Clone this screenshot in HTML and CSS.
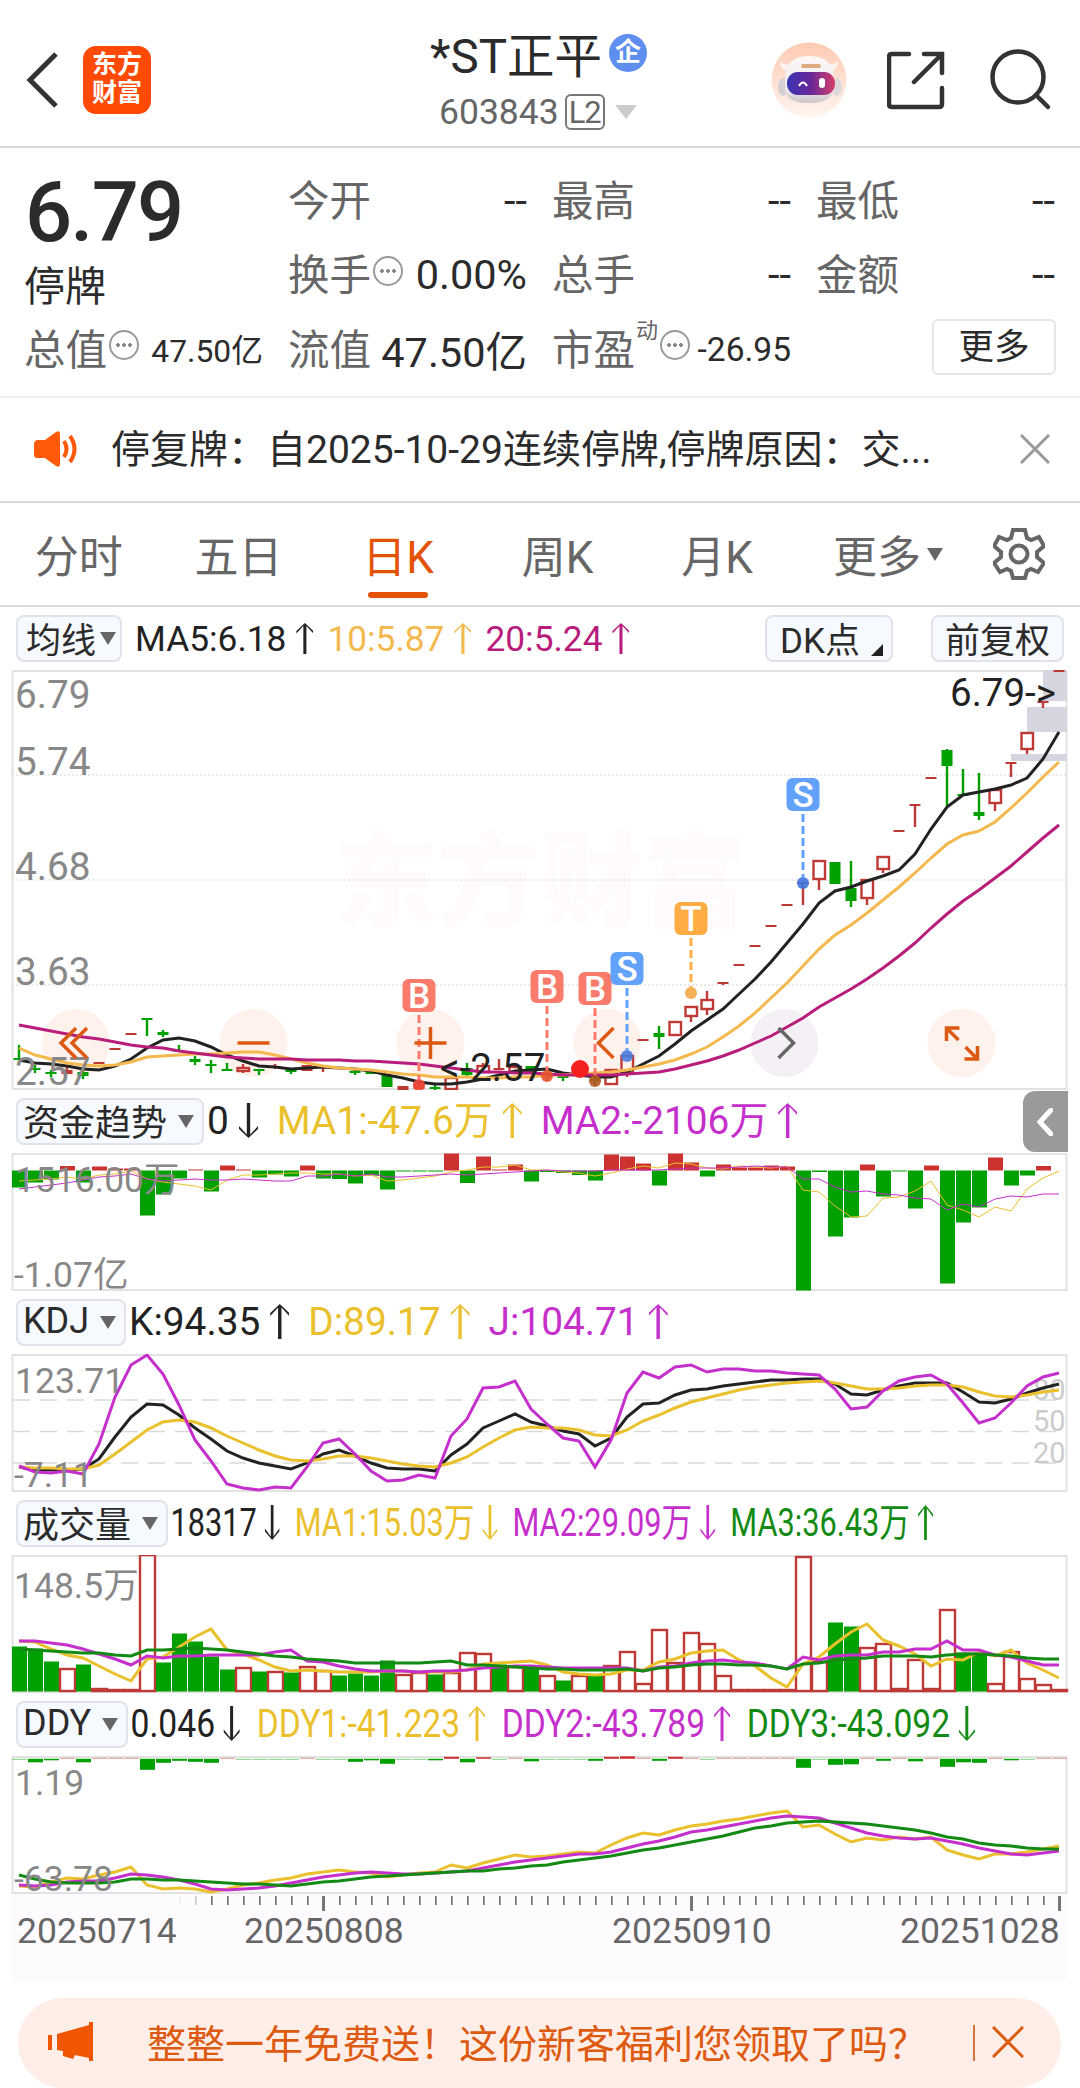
FILE: index.html
```html
<!DOCTYPE html>
<html lang="zh-CN">
<head>
  <meta charset="UTF-8" />
  <meta name="viewport" content="width=device-width, initial-scale=1.0"/>
  <title>*ST正平 603843</title>
  <link rel="stylesheet" href="styles.css">
</head>
<body>

  <header class="header">
    <svg class="back" width="34" height="58" viewBox="0 0 34 58"><path d="M30 3L4 29L30 55"/></svg>
    <div class="logo">东方<br>财富</div>
    <div class="title">
      <div class="title-name">*ST正平<span class="badge">企</span></div>
      <div class="title-code">603843<span class="level">L2</span><i class="tri tri-light"></i></div>
    </div>
    <div class="actions">
      <svg width="76" height="76" viewBox="0 0 76 76">
        <defs>
          <linearGradient id="halo" x1="0" y1="0" x2="0" y2="1"><stop offset="0" stop-color="#fdcab2"/><stop offset="1" stop-color="#fff5f0"/></linearGradient>
          <linearGradient id="visor" x1="0" y1="0" x2="1" y2="0"><stop offset="0" stop-color="#3a35b5"/><stop offset="0.5" stop-color="#6a2798"/><stop offset="1" stop-color="#d63f6c"/></linearGradient>
          <linearGradient id="shell" x1="0" y1="0" x2="0" y2="1"><stop offset="0" stop-color="#fdf8f7"/><stop offset="0.7" stop-color="#eeeaec"/><stop offset="1" stop-color="#c9c4c6"/></linearGradient>
        </defs>
        <circle cx="38" cy="38" r="37.5" fill="url(#halo)"/>
        <path d="M9 19Q9 29 18 29L22 22Q13 24 9 19ZM67 19Q67 29 58 29L54 22Q63 24 67 19Z" fill="#fbf3f1"/>
        <ellipse cx="12" cy="45" rx="5" ry="9" fill="#d5d0d4"/>
        <ellipse cx="66" cy="45" rx="5" ry="9" fill="#ddd8dc"/>
        <path d="M14 38Q14 14 38 14Q63 14 63 38V46Q62 61 38 61Q14 61 14 47Z" fill="url(#shell)"/>
        <rect x="16" y="30" width="48" height="23" rx="11" fill="url(#visor)"/>
        <rect x="30" y="22" width="20" height="4" rx="2" fill="#dfa97f"/>
        <path d="M28 44Q32 37 36 44" fill="none" stroke="#fff" stroke-width="2"/>
        <rect x="48" y="36" width="6" height="10" rx="3" fill="#fff"/>
      </svg>
      <svg class="icon-line" width="60" height="60" viewBox="0 0 60 60"><path d="M22 4H5Q2 4 2 7V54Q2 57 5 57H52Q55 57 55 54V38M37 4H55V23M55 4L27 32"/></svg>
      <svg class="icon-line" width="62" height="62" viewBox="0 0 62 62"><circle cx="28" cy="28" r="25.5"/><path d="M46 46L58 58"/></svg>
    </div>
  </header>

  <section class="quote">
    <div class="quote-main">
      <div class="price">6.79</div>
      <div class="state">停牌</div>
    </div>
    <div class="cell"><span>今开</span><b>--</b></div>
    <div class="cell"><span>最高</span><b>--</b></div>
    <div class="cell"><span>最低</span><b>--</b></div>
    <div class="cell"><span>换手</span><i class="dots"></i><b>0.00%</b></div>
    <div class="cell"><span>总手</span><b>--</b></div>
    <div class="cell"><span>金额</span><b>--</b></div>
    <div class="cell"><span>总值</span><i class="dots"></i><b class="small">47.50亿</b></div>
    <div class="cell"><span>流值</span><b>47.50亿</b></div>
    <div class="cell"><span>市盈</span><sup>动</sup><i class="dots"></i><b class="small pe">-26.95</b></div>
    <div class="cell"><button class="more">更多</button></div>
  </section>

  <section class="notice">
    <svg width="46" height="38" viewBox="0 0 46 38"><path d="M2 11Q2 10 3 10H11L22 2Q26 0 26 4V34Q26 38 22 36L11 28H3Q0 28 0 24V14Q0 11 3 10Z" fill="#ff5a0a"/><path d="M30 11Q35 19 30 27M36 6Q45 19 36 32" fill="none" stroke="#ff5a0a" stroke-width="4"/></svg>
    <p>停复牌：自2025-10-29连续停牌,停牌原因：交...</p>
    <svg width="30" height="30" viewBox="0 0 30 30"><path d="M1 1L29 29M29 1L1 29" stroke="#999" stroke-width="3"/></svg>
  </section>

  <nav class="tabs">
    <a>分时</a>
    <a>五日</a>
    <a class="active">日K</a>
    <a>周K</a>
    <a>月K</a>
    <a class="tab-more">更多<i class="tri"></i></a>
    <svg width="52" height="54" viewBox="-26 -27 52 54"><path d="M-6 -24H6L8 -16L12 -14L20 -17L25 -8L18 -2V3L25 9L19 18L12 15L8 17L6 24H-6L-8 17L-12 15L-19 18L-25 9L-18 3V-2L-25 -8L-20 -17L-12 -14L-8 -16Z"/><circle r="8.5"/></svg>
  </nav>

  <div class="legend legend-ma">
    <span class="chip">均线<i class="tri"></i></span>
    <div class="values">
      <span class="black up">MA5:6.18</span>
      <span class="gold up">10:5.87</span>
      <span class="plum up">20:5.24</span>
    </div>
    <span class="chip chip-dk">DK点<i class="corner"></i></span>
    <span class="chip chip-fq">前复权</span>
  </div>
  <svg class="panel" id="kline" width="1080" height="420"></svg>

  <div class="legend">
    <span class="chip">资金趋势<i class="tri"></i></span>
    <div class="values">
      <span class="black down">0</span>
      <span class="yellow up">MA1:-47.6万</span>
      <span class="pink up">MA2:-2106万</span>
    </div>
    <span class="drawer"><svg width="16" height="28" viewBox="0 0 16 28"><path d="M14 2L3 14L14 26"/></svg></span>
  </div>
  <svg class="panel" id="fund" width="1080" height="138"></svg>

  <div class="legend">
    <span class="chip">KDJ<i class="tri"></i></span>
    <div class="values">
      <span class="black up">K:94.35</span>
      <span class="yellow up">D:89.17</span>
      <span class="pink up">J:104.71</span>
    </div>
  </div>
  <svg class="panel" id="kdj" width="1080" height="138"></svg>

  <div class="legend">
    <span class="chip">成交量<i class="tri"></i></span>
    <div class="values narrow-vol">
      <span class="black down">18317</span>
      <span class="yellow down">MA1:15.03万</span>
      <span class="pink down">MA2:29.09万</span>
      <span class="green up">MA3:36.43万</span>
    </div>
  </div>
  <svg class="panel" id="vol" width="1080" height="138"></svg>

  <div class="legend">
    <span class="chip">DDY<i class="tri"></i></span>
    <div class="values narrow-ddy">
      <span class="black down">0.046</span>
      <span class="yellow up">DDY1:-41.223</span>
      <span class="pink up">DDY2:-43.789</span>
      <span class="green down">DDY3:-43.092</span>
    </div>
  </div>
  <svg class="panel" id="ddy" width="1080" height="138"></svg>

  <svg class="axis" id="axis" width="1080" height="86"></svg>

  <footer class="promo">
    <svg width="46" height="40" viewBox="0 0 46 40"><path d="M0 13H4V28H0ZM9 12L41 3V0H45V39H41V36L27 33L25 37L15 34V29L9 28Z" fill="#f05500"/></svg>
    <p>整整一年免费送！这份新客福利您领取了吗？</p>
    <i class="divider"></i>
    <svg width="32" height="32" viewBox="0 0 32 32"><path d="M1 1L31 31M31 1L1 31" stroke="#dd5a10" stroke-width="3"/></svg>
  </footer>

  <script src="charts.js"></script>
</body>
</html>
```
FILE: styles.css
```css
* {
  box-sizing: border-box;
}

body {
  margin: 0;
  width: 1080px;
  height: 2088px;
  overflow: hidden;
  background: #fff;
  color: #2b2b2b;
  font-family: Roboto, "Noto Sans CJK SC", sans-serif;
}

svg {
  display: block;
  flex: none;
}

p {
  margin: 0;
}

i {
  font-style: normal;
}

.tri {
  display: inline-block;
  border: 8px solid transparent;
  border-top: 13px solid #666;
  border-bottom: 0;
}

.tri-light {
  border-width: 14px 11px 0;
  border-top-color: #ccc;
  margin-left: 10px;
}

/* header */
.header {
  display: flex;
  align-items: center;
  height: 148px;
  padding: 14px 28px 0 26px;
  border-bottom: 2px solid #d9d9d9;
}

.back {
  fill: none;
  stroke: #333;
  stroke-width: 5;
}

.logo {
  width: 68px;
  height: 68px;
  margin-left: 23px;
  padding-top: 5px;
  border-radius: 13px;
  background: #ff4a05;
  color: #fff;
  font-size: 25px;
  font-weight: 700;
  line-height: 28px;
  text-align: center;
}

.title {
  width: 250px;
  margin-left: 272px;
}

.title-name,
.title-code {
  display: flex;
  align-items: center;
  white-space: nowrap;
}

.title-name {
  height: 56px;
  margin: 5px 0 0 7px;
  font-size: 47.5px;
}

.badge {
  width: 38px;
  height: 38px;
  margin-left: 7px;
  border-radius: 50%;
  background: #5f8fee;
  color: #fff;
  font-size: 26px;
  font-weight: 700;
  line-height: 36px;
  text-align: center;
}

.title-code {
  height: 58px;
  margin: 2px 0 0 16px;
  color: #666;
  font-size: 35.5px;
}

.level {
  width: 40px;
  height: 36px;
  margin-left: 6px;
  border: 2px solid #777;
  border-radius: 6px;
  font-size: 31px;
  line-height: 33px;
  letter-spacing: -1px;
  text-align: center;
}

.actions {
  display: flex;
  align-items: center;
  margin-left: auto;
}

.actions svg + svg {
  margin-left: 40px;
}

.actions svg + svg + svg {
  margin-left: 43px;
}

.icon-line {
  fill: none;
  stroke: #333;
  stroke-width: 4.5;
  stroke-linecap: round;
}

/* quote */
.quote {
  display: grid;
  grid-template-columns: repeat(4, 238px);
  grid-template-rows: repeat(3, 74.5px);
  column-gap: 26px;
  height: 250px;
  padding: 15px 25px 0;
  border-bottom: 2px solid #efefef;
}

.quote-main {
  grid-row: span 2;
}

.price {
  height: 100px;
  font-size: 83px;
  font-weight: 500;
  line-height: 100px;
  letter-spacing: -1.8px;
}

.state {
  margin-left: -1px;
  font-size: 41px;
  line-height: 49px;
}

.cell {
  display: flex;
  align-items: center;
  font-size: 41.5px;
  white-space: nowrap;
}

.cell span {
  margin: -5px 0 0 -1px;
  color: #666;
}

.cell b {
  margin-left: auto;
  font-weight: 400;
}

.cell .small {
  margin-top: -3px;
  font-size: 31.8px;
}

.cell .pe {
  margin-top: 0;
  font-size: 33.5px;
}

.cell sup {
  margin: -36px 0 0 1px;
  color: #666;
  font-size: 22px;
  line-height: 22px;
}

.dots {
  width: 30px;
  height: 30px;
  margin: -8px 0 0 2px;
  border: 2px solid #999;
  border-radius: 50%;
  background:
    radial-gradient(circle at 7px 13px, #888 1.6px, transparent 2px),
    radial-gradient(circle at 13px 13px, #888 1.6px, transparent 2px),
    radial-gradient(circle at 19px 13px, #888 1.6px, transparent 2px);
}

.more {
  width: 124px;
  height: 56px;
  margin: -4px -1px 0 auto;
  padding: 0;
  border: 2px solid #e6e6e6;
  border-radius: 6px;
  background: #fff;
  color: #2b2b2b;
  font: inherit;
  font-size: 35.5px;
  line-height: 50px;
}

/* notice */
.notice {
  display: flex;
  align-items: center;
  height: 105px;
  padding: 0 30px 2px 34px;
  border-bottom: 2px solid #d9d9d9;
}

.notice p {
  flex: 1;
  margin: -5px 0 0 31px;
  font-size: 39px;
  white-space: nowrap;
}

/* tabs */
.tabs {
  display: flex;
  align-items: center;
  height: 104px;
  border-bottom: 2px solid #dcdcdc;
  color: #666;
  font-size: 44px;
}

.tabs a {
  position: relative;
  left: -1px;
  width: 159.6px;
  text-align: center;
}

.tabs .active {
  color: #e35205;
}

.tabs .active::after {
  content: "";
  position: absolute;
  left: 50px;
  bottom: -12px;
  width: 60px;
  height: 6px;
  border-radius: 3px;
  background: #e35205;
}

.tabs .tab-more {
  display: flex;
  align-items: center;
  width: 157px;
  margin-left: 36px;
}

.tab-more .tri {
  margin-left: 6px;
}

.tabs svg {
  margin-left: 2px;
  fill: none;
  stroke: #666;
  stroke-width: 4;
}

/* legends */
.legend {
  display: flex;
  align-items: center;
  height: 63px;
  padding-left: 16px;
  font-size: 38.8px;
  white-space: nowrap;
}

.chip {
  display: flex;
  align-items: center;
  flex: none;
  height: 47px;
  padding: 0 8px 3px 5px;
  border: 2px solid #e1e2ea;
  border-radius: 8px;
  background: #f6f9fe;
  font-size: 36px;
}

.chip .tri {
  margin: 3px 0 0 11px;
}

.values {
  display: flex;
  height: 44px;
  margin-top: -2px;
  line-height: 44px;
  transform-origin: left center;
}

.values span {
  display: flex;
  align-items: center;
  margin: 0 16px 0 3px;
}

/* arrows: stem plus open head */
.up::after,
.down::after {
  content: "";
  width: 19px;
  height: 35px;
  margin-left: 10px;
  background: currentColor;
  clip-path: polygon(50% 0, 100% 26%, 100% 34%, 59% 10%, 59% 100%, 41% 100%, 41% 10%, 0 34%, 0 26%);
}

.down::after {
  transform: rotate(180deg);
}

.narrow-vol {
  transform: scaleX(0.792);
}

.narrow-ddy {
  transform: scaleX(0.867);
}

.legend-ma {
  height: 63px;
  font-size: 35.3px;
}

.legend-ma .chip {
  padding: 0 4px 3px 8px;
  font-size: 35px;
}

.legend-ma .chip .tri {
  margin-left: 4px;
}

.legend-ma .values {
  margin: 0 0 0 10px;
}

.legend-ma .values span {
  margin-right: 11px;
}

.legend-ma .values span::after {
  width: 17px;
  height: 31px;
}

.legend-ma .chip-dk {
  width: 128px;
  margin-left: auto;
  padding: 0 0 3px 13px;
}

.legend-ma .chip-fq {
  width: 133px;
  margin: 0 16px 0 38px;
  padding-left: 12px;
}

.corner {
  margin: 26px 0 0 11px;
  border-left: 12px solid transparent;
  border-bottom: 12px solid #222;
}

.drawer {
  display: flex;
  align-items: center;
  width: 45px;
  height: 61px;
  margin: 0 12px 0 auto;
  padding-left: 14px;
  border-radius: 12px 0 0 12px;
  background: #9b999c;
}

.drawer path {
  fill: none;
  stroke: #fff;
  stroke-width: 5;
  stroke-linecap: round;
}

.black { color: #222; }
.gold { color: #f3b94e; }
.plum { color: #b81d7b; }
.yellow { color: #eac02d; }
.pink { color: #c52fcb; }
.green { color: #138a13; }

/* charts */
.frame {
  fill: none;
  stroke: #e2e2e2;
  stroke-width: 2;
}

.grid {
  stroke: #e4e4e4;
  stroke-width: 1.5;
  stroke-dasharray: 2 2;
}

.dash {
  stroke: #d9d9d9;
  stroke-width: 1.5;
  stroke-dasharray: 17 10;
}

.scale {
  fill: #888;
  font-size: 35.5px;
}

.scale-big {
  fill: #888;
  font-size: 38.7px;
}

.level-mark {
  fill: #ccc;
  font-size: 29px;
}

.extreme {
  fill: #222;
  font-size: 38.5px;
}

.watermark {
  fill: #fefafe;
  font-size: 103px;
  font-weight: 900;
}

.tag {
  fill: #fff;
  font-size: 35px;
  font-weight: 500;
  text-anchor: middle;
}

.tool {
  fill: none;
  stroke: #dd5a14;
  stroke-width: 3.5;
}

.tool-next {
  stroke: #666;
}

.date {
  fill: #666;
  font-size: 35.5px;
}

/* promo */
.promo {
  display: flex;
  align-items: center;
  height: 90px;
  margin: 18px 19px 0 18px;
  padding: 0 37px 0 30px;
  border-radius: 45px;
  background: #ffeee7;
  color: #dd5a10;
}

.promo p {
  flex: 1;
  margin: -5px 0 0 53px;
  font-size: 39px;
  white-space: nowrap;
}

.promo svg {
  margin-top: -2px;
}

.divider {
  width: 2px;
  height: 36px;
  margin-right: 17px;
  background: #d9743c;
}
```
FILE: charts.js
```js
const LEFT = 12, RIGHT = 1067;
const RED = "#bf3a36", GREEN = "#00a000";
const BLACK = "#222", GOLD = "#f3b94e", PLUM = "#b81d7b";
const YELLOW = "#eac02d", PINK = "#c52fcb", DEEP = "#138a13";

const x = i => 19 + 16 * i;

function line(ys, color, width = 3) {
  const pts = ys.map((y, i) => x(i) + "," + y).join(" ");
  return `<polyline points="${pts}" fill="none" stroke="${color}" stroke-width="${width}"/>`;
}

function rect(x0, y0, w, h, fill, extra = "") {
  return `<rect x="${x0}" y="${y0}" width="${w}" height="${h}" fill="${fill}" ${extra}/>`;
}

function text(x0, y0, str, cls = "scale") {
  return `<text x="${x0}" y="${y0}" class="${cls}">${str}</text>`;
}

function frame(h) {
  return `<rect class="frame" x="${LEFT}.5" y="1" width="${RIGHT - LEFT - 1}" height="${h - 2}"/>`;
}

function draw(id, parts) {
  document.getElementById(id).innerHTML = parts.join("");
}

/* ---- K line: [index, type, body top, body bottom, high, low] ---- */
// g = falling, r = rising (hollow), f = rising, thin body
const candles = [
  [0,"g",388,390,375,390],[1,"g",398,400,395,403],[2,"g",402,404,400,407],[3,"f",400,404,396,404],
  [4,"g",402,406,399,409],[5,"f",392,394],[6,"f",378,380],[7,"f",363,365],[8,"g",348,350,348,366],
  [9,"g",362,365,360,367],[10,"g",380,382,375,382],[11,"g",389,392,386,395],[12,"g",394,396,390,403],
  [13,"g",399,401,393,401],[14,"r",397,401,394,403],[15,"g",399,401,399,405],[16,"f",396,398,394,399],
  [17,"g",399,402,398,404],[18,"f",395,401],[19,"f",396,398,395,402],[20,"g",397,398],[21,"g",401,403,400,405],
  [22,"g",402,404],[23,"g",405,417],[24,"f",416,420],[25,"f",413,419,410,419],[26,"g",417,419,414,420],
  [27,"r",407,419],[28,"g",398,405,393,407],[29,"r",395,402,393,402],[30,"f",398,400,389,400],
  [31,"r",396,402],[32,"g",396,403],[33,"f",405,407,404,411],[34,"g",406,408,406,411],[36,"g",409,411,407,415],
  [37,"r",399,414],[38,"r",385,403,385,407],[39,"f",369,371],[40,"g",363,367,356,379],[41,"r",351,365,351,366],
  [42,"r",336,346,336,352],[43,"r",329,339,321,345],[44,"f",312,314,312,315],[45,"f",294,296],[46,"f",275,277],
  [47,"f",255,257],[48,"f",234,236],[49,"f",212,214,212,235],[50,"r",190,209,190,220],[51,"g",192,214],
  [52,"g",218,231,191,237],[53,"r",209,228,209,235],[54,"r",186,199,186,203],[55,"f",160,162],
  [56,"f",134,136,134,157],[57,"f",107,109],[58,"g",80,96,79,136],[59,"g",124,126,99,126],[60,"g",142,146,103,150],
  [61,"r",119,133,119,141],[62,"f",92,94,92,107],[63,"r",62,79,62,84],[64,"f",31,33,31,38],[65,"f",0,2]
];
const ma5 = [390,393,394,396,399,400,396,389,378,370,368,371,377,385,391,396,397,399,398,397,
  398,399,401,405,408,412,414,414,412,409,405,401,400,399,403,405,407,407,402,394,
  386,374,361,350,339,324,309,292,273,254,233,221,217,211,206,200,184,159,137,125,122,119,115,108,89,62];
const ma10 = [378,385,389,393,395,396,395,392,387,386,385,384,384,383,382,382,385,389,393,396,
  398,399,400,402,404,405,407,407,407,408,408,407,407,405,405,404,403,402,400,397,
  394,390,384,377,367,356,343,328,313,296,279,265,255,243,230,217,203,188,174,165,161,152,138,123,107,92];
const ma20 = [355,358,361,364,367,369,372,375,377,378,381,383,385,387,388,389,389,389,390,390,
  390,391,391,392,393,394,396,398,400,402,402,403,403,404,405,405,405,405,404,403,
  402,399,395,391,386,380,373,366,357,348,337,328,319,309,298,286,273,258,244,231,220,208,196,182,168,155];

function candle([i, type, top, bottom, high, low]) {
  const color = type === "g" ? GREEN : RED;
  let out = "";
  if (high !== undefined) {
    const stem = (a, b) => b > a ? rect(x(i) - 1.2, a, 2.4, b - a, color) : "";
    out += type === "r" ? stem(high, top) + stem(bottom, low) : stem(high, low);
  }
  if (type === "r") {
    out += rect(x(i) - 5.5, top + 1, 11.5, bottom - top - 1, "none", `stroke="${color}" stroke-width="2.4"`);
  } else {
    out += rect(x(i) - 5.5, top, 11, bottom - top, color);
  }
  return out;
}

/* trade markers: [index, letter, tag top, dot y, tag colour, dot colour] */
const marks = [
  [25,"B",309,415,"#fa7b6c","#f24a35"],[33,"B",300,406,"#fa7b6c","#e8552f"],[36,"B",302,411,"#fa7b6c","#b5561f"],
  [38,"S",282,386,"#62a2fb","#4a7be0"],[42,"T",232,323,"#ffac45","#f5a742"],[49,"S",108,213,"#62a2fb","#3f74dc"]
];

function mark([i, letter, top, dot, color, dotColor]) {
  return `<line x1="${x(i)}" y1="${top + 36}" x2="${x(i)}" y2="${dot - 6}" stroke="${color}" stroke-width="3" stroke-dasharray="8 4"/>`
    + `<circle cx="${x(i)}" cy="${dot}" r="6" fill="${dotColor}" opacity="0.9"/>`
    + rect(x(i) - 16.5, top, 33, 33, color, 'rx="6"')
    + text(x(i), top + 29, letter, "tag");
}

const tools = [
  [76, "M0 -15L-15 0L0 15M11 -15L-4 0L11 15"],
  [253.5, "M-16 0H16"],
  [430.5, "M-16 0H16M0 -16V16"],
  [607.5, "M6 -15L-9 0L6 15"],
  [784.5, "M-6 -15L9 0L-6 15"],
  [961.5, "M-15 -2V-15H-2M-15 -15L-3 -3M16 3V16H3M16 16L4 4"]
];

draw("kline", [
  text(334, 249, "东方财富", "watermark"),
  ...[105, 210, 315].map(y => `<line class="grid" x1="12" x2="1067" y1="${y}" y2="${y}"/>`),
  frame(420),
  ...tools.map(([cx], n) => `<circle cx="${cx}" cy="373" r="34" fill="${n === 4 ? "#f5f0f5" : "#fff1ec"}"/>`),
  rect(1043, 0, 24, 31, "#d5d5df"), rect(1027, 37, 40, 25, "#d5d5df"), rect(1011, 84, 56, 7, "#d5d5df"),
  ...candles.map(candle),
  line(ma5, BLACK), line(ma10, GOLD), line(ma20, PLUM),
  ...[["6.79", 38], ["5.74", 105], ["4.68", 210], ["3.63", 315], ["2.57", 415]].map(([s, y]) => text(15, y, s, "scale-big")),
  text(440, 411, "&lt;-2.57", "extreme"),
  text(950, 36, "6.79-&gt;", "extreme"),
  ...marks.map(mark),
  `<circle cx="580" cy="399" r="9" fill="#f62020"/>`,
  ...tools.map(([cx, d], n) => `<path class="tool${n === 4 ? " tool-next" : ""}" transform="translate(${cx} 373)" d="${d}"/>`)
]);

/* ---- money flow ---- */
const flow = [17,12,9,-4.5,12,-4,-2,-2,45,24,8,-1,21,-5,-1,7,4,6,-5,8,8.5,13,5,19,1,1,1,-17,12.5,-14,-1,-6,11,
  1.5,2.5,4.5,10,-16,-14,-7,15,-17,-8,6,-6,-3,-3,-5,-4,120,1.5,66,47,-6,26,1,38,-5,113,52,37,-13,15,5,-4.5,0];
const flowMa1 = [28,27,26,24,26,22,21,18,26,29,31,33,37,27,22,22,21,20,20,21,21,23,22,28,27,25,23,19,17,14,
  14,12,17,17,19,20,23,20,16,13,15,10,11,15,16,13,14,15,13,37,39,53,64,63,45,44,38,28,52,57,64,54,58,36,25,18];
const flowMa2 = [36,34,32,30,27,24,23,21,26,28,27,26,27,27,26,27,28,28,23,23,21,23,21,24,24,23,22,21,22,21,
  20,19,18,17,18,18,18,17,17,17,17,16,15,15,15,14,13,14,14,26,26,34,39,38,41,42,45,46,57,51,54,46,43,44,41,41];

function bars(values, zero, minSolid = 0) {
  return values.map((v, i) => {
    const y = v > 0 ? zero : zero + v;
    const fade = Math.abs(v) <= minSolid ? 'opacity="0.5"' : "";
    return rect(x(i) - 7, y, 15, Math.abs(v), v > 0 ? GREEN : "#cc3330", fade);
  }).join("");
}

draw("fund", [
  frame(138),
  bars(flow, 17.5),
  line(flowMa1, YELLOW, 1), line(flowMa2, PINK, 1),
  text(15, 39, "1516.00万"), text(14, 134, "-1.07亿")
]);

/* ---- KDJ ---- */
const k = [113,116,116,116,115,105,83,63,50,51,61,74,85,97,104,109,112,115,109,100,96,102,109,114,115,115,117,101,90,74,
  67,60,68,72,77,80,92,84,63,50,49,41,36,35,32,30,28,26,26,25,25,30,40,41,36,32,29,29,29,38,48,49,45,39,34,30];
const d = [113,114,114,115,115,111,100,88,76,68,66,68,74,82,89,96,102,106,107,105,102,102,104,107,110,112,113,109,103,93,
  84,76,73,74,74,76,81,82,76,67,61,54,48,44,40,36,33,31,29,28,27,29,32,35,35,34,32,31,31,33,38,42,43,41,38,36];
const j = [112,118,119,117,120,90,43,11,1,20,51,86,107,130,134,136,133,134,113,89,85,100,117,127,126,121,124,82,65,34,
  33,27,55,70,84,87,113,86,39,18,24,13,11,18,15,15,17,17,19,20,21,35,55,53,37,27,23,21,30,49,69,64,49,32,23,19];

draw("kdj", [
  frame(138),
  ...[46, 77.5, 109].map(y => `<line class="dash" x1="13" x2="1066" y1="${y}" y2="${y}"/>`),
  text(1033, 46, "80", "level-mark"), text(1033, 77, "50", "level-mark"), text(1033, 109, "20", "level-mark"),
  line(k, BLACK), line(d, YELLOW), line(j, PINK),
  text(15, 39, "123.71"), text(14, 133, "-7.11")
]);

/* ---- volume: negative = rising day, drawn hollow ---- */
const volume = [45,43,30,-22,27,-2,-1,-1,-136,29,58,50,35,22,-23,20,-19,19,-24,-20,16,18,16,31,-16,-18,17,-18,-38,-37,
  27,-24,23,-15,11,-15,16,-25,-39,-7,-61,-28,-58,-47,-15,-1,-1,-1,-1,-134,-29,69,65,-43,-47,-2,-31,-2,-81,39,39,-7,-39,-12,-6,-1];
const volMa1 = [86,87,94,100,103,111,119,126,104,102,92,82,74,95,99,105,112,116,115,116,117,117,117,116,116,117,117,117,115,109,
  108,107,106,110,117,119,120,119,115,115,107,104,98,96,95,105,111,123,132,109,102,89,77,69,85,91,99,111,104,105,97,101,95,108,115,123];
const volMa2 = [86,86,88,90,94,99,104,110,101,103,101,101,100,100,100,100,97,95,106,107,111,114,116,116,116,117,116,116,115,113,
  112,111,111,112,113,113,113,113,113,116,112,111,108,106,105,107,108,111,114,102,105,101,100,100,97,97,94,94,86,95,95,100,102,106,110,110];
const volMa3 = [94,95,96,97,98,98,100,101,95,95,94,93,94,95,97,99,101,102,104,105,106,108,108,108,108,108,107,106,110,110,
  111,112,113,114,114,115,115,115,114,116,113,112,110,109,109,110,110,111,114,109,108,105,104,103,101,101,101,102,100,99,99,100,101,103,104,104];

draw("vol", [
  frame(138),
  ...volume.map((v, i) => v > 0
    ? rect(x(i) - 7, 136.5 - v, 15, v, GREEN)
    : rect(x(i) - 7, 136 + v, 15, -v, "none", `stroke="${RED}" stroke-width="2.4"`)),
  line(volMa1, YELLOW), line(volMa2, PINK), line(volMa3, DEEP),
  text(14, 43, "148.5万")
]);

/* ---- DDY ---- */
const ddy = [1,3.5,1.5,-1,3.5,-1,-1,-1,11,4,2,3,4,-1,1,1,1,1,-1,1,1,3,1.5,5,1,1,1.5,-2,3.5,-1.5,1,-1,2.5,
  1,1,1,2,-2,-2.5,-1,2,-2,-1,1,-1,-1,-1,-1,-1,9,1,6,5.5,-1,2,-1,2.5,-1,8,3.5,4,-1,1.5,1,-1,-1];
const ddy1 = [130,131,126,122,123,119,116,111,129,133,132,133,136,133,129,127,124,122,118,116,114,116,117,121,119,117,116,109,112,107,
  103,99,101,100,98,96,97,89,82,77,79,74,70,68,65,63,60,57,55,71,69,78,86,82,84,81,83,81,94,99,103,98,98,96,93,90];
const ddy2 = [129,130,129,126,125,125,122,118,119,121,124,128,133,134,133,132,130,127,124,121,119,117,116,117,118,118,117,116,115,112,
  109,106,104,102,100,98,98,96,92,88,85,81,76,74,71,68,65,62,60,61,62,67,72,77,80,82,83,82,85,88,92,95,98,99,97,95];
const ddy3 = [119,123,126,127,127,127,126,123,123,124,124,125,126,127,128,128,129,130,128,126,125,123,121,120,119,118,117,116,115,115,
  113,112,110,109,106,104,102,100,97,94,92,89,86,83,80,76,72,70,67,66,65,66,67,68,70,72,74,77,81,83,87,89,90,92,93,93];

draw("ddy", [
  frame(138),
  bars(ddy, 2.8, 1),
  line(ddy1, YELLOW), line(ddy2, PINK), line(ddy3, DEEP),
  text(15, 39, "1.19"), text(14, 135, "-63.78")
]);

/* ---- dates ---- */
const ticks = [];
for (let i = 10; i < 66; i++) {
  const major = i === 19 || i === 42 || i === 65;
  const fade = i === 10 ? 0.1 : i === 11 ? 0.35 : 1;
  ticks.push(rect(x(i) - (major ? 1 : 0), 2, major ? 3 : 1.7, major ? 15 : 9, "#777", `opacity="${fade}"`));
}
draw("axis", [
  rect(12, 0, 1055, 86, "#fefbff"),
  ...ticks,
  text(17, 49, "20250714", "date"), text(244, 49, "20250808", "date"),
  text(612, 49, "20250910", "date"), text(900, 49, "20251028", "date")
]);
```
